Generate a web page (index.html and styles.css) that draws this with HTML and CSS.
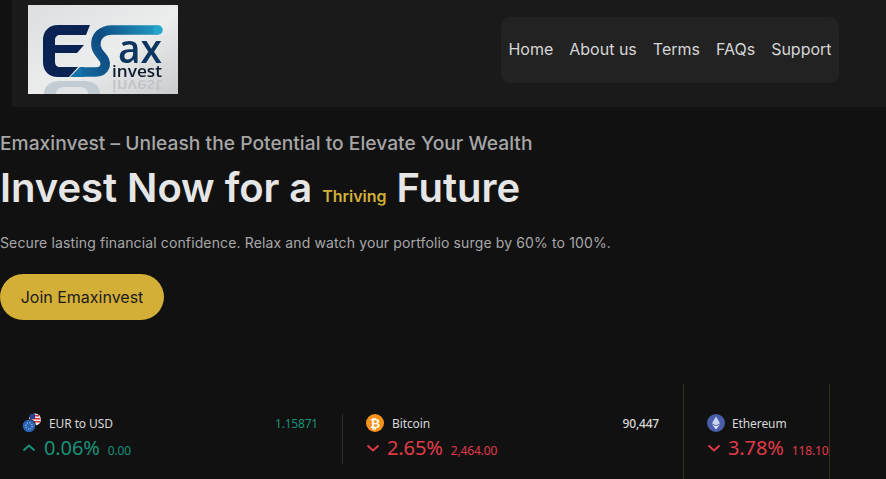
FILE: index.html
```html
<!DOCTYPE html>
<html lang="en">
<head>
<meta charset="utf-8">
<title>Emaxinvest</title>
<link rel="stylesheet" href="styles.css">
</head>
<body>
<header class="header">
  <div class="logo">
    <svg class="logo-art" viewBox="0 0 150 89" width="150" height="89">
      <defs>
        <linearGradient id="bg" x1="0" y1="0" x2="1" y2="1">
          <stop offset="0" stop-color="#dcdee0"/><stop offset=".55" stop-color="#eceded"/><stop offset="1" stop-color="#c9cbcd"/>
        </linearGradient>
        <linearGradient id="sw" gradientUnits="userSpaceOnUse" x1="45" y1="72" x2="134" y2="20">
          <stop offset="0" stop-color="#1273a8"/><stop offset=".42" stop-color="#0e4a80"/><stop offset="1" stop-color="#25a5cc"/>
        </linearGradient>
      </defs>
      <rect width="150" height="89" fill="url(#bg)"/>
      <path d="M16 89c0-9 7-13 16-13h24c9 0 16 4 16 13z" fill="#c4ccd3"/>
      <path d="M28 89c0-5 4-7 9-7h14c5 0 9 2 9 7z" fill="#e2e5e8"/>
      <path d="M62 20H30C21 20 15 26 15 35v22c0 9 6 15 15 15h11l9-10H32c-3 0-5-2-5-5v-9h22l7-8H27v-5c0-3 2-5 5-5h26z" fill="#0b2352"/>
      <path d="M42 72 52 62H56V72Z" fill="#1273a8"/>
      <path d="M54 67H68C75 67 78 62 77 57C76 51 69 49 68 41C67 31 74 25 84 25H130" fill="none" stroke="url(#sw)" stroke-width="9.500"/>
      <circle cx="130" cy="25" r="4.750" fill="#25a5cc"/>
      <text class="logo-ax" x="90" y="58" textLength="44" lengthAdjust="spacingAndGlyphs">ax</text>
      <text class="logo-invest" x="84" y="72" textLength="50" lengthAdjust="spacingAndGlyphs">invest</text>
      <text class="logo-mirror" x="84" y="-75" textLength="50" lengthAdjust="spacingAndGlyphs" transform="scale(1 -1)">invest</text>
    </svg>
  </div>
  <nav class="nav">
    <a href="#">Home</a>
    <a href="#">About us</a>
    <a href="#">Terms</a>
    <a href="#">FAQs</a>
    <a href="#">Support</a>
  </nav>
</header>

<main class="hero">
  <p class="tagline">Emaxinvest – Unleash the Potential to Elevate Your Wealth</p>
  <h1 class="title">Invest Now for a <span class="accent">Thriving</span> Future</h1>
  <p class="lead">Secure lasting financial confidence. Relax and watch your portfolio surge by 60% to 100%.</p>
  <a class="cta" href="#">Join Emaxinvest</a>
</main>

<section class="ticker">
  <div class="cell cell-short">
    <div class="row-top">
      <svg class="coin" viewBox="0 0 20 20" width="20" height="20">
        <circle cx="13" cy="6.500" r="6" fill="#e9e9e9"/>
        <path d="M8 2h9v1.500H8zM8.500 5h10v1.500h-10zM9 8h9v1.500H9z" fill="#d8333b"/>
        <path d="M8 1h5v5H8z" fill="#27408f"/>
        <circle cx="7" cy="13" r="7" fill="#0f1111"/>
        <circle cx="7" cy="13" r="6.200" fill="#2b64b5"/>
        <circle cx="7" cy="13" r="3.200" fill="none" stroke="#dfe7f5" stroke-width="1" stroke-dasharray="1 1.500"/>
      </svg>
      <span class="name">EUR to USD</span>
      <span class="price up">1.15871</span>
    </div>
    <div class="row-bottom up">
      <svg class="chev" viewBox="0 0 14 8" width="14" height="8"><path d="M1.500 6.500 7 1.500l5.500 5" fill="none" stroke="currentColor" stroke-width="2"/></svg>
      <span class="pct">0.06%</span>
      <span class="abs">0.00</span>
    </div>
  </div>
  <div class="cell cell-full">
    <div class="row-top">
      <svg class="coin" viewBox="0 0 18 18" width="18" height="18">
        <circle cx="9" cy="9" r="9" fill="#f7931a"/>
        <text class="coin-glyph" x="9" y="13.500" text-anchor="middle">₿</text>
      </svg>
      <span class="name">Bitcoin</span>
      <span class="price white">90,447</span>
    </div>
    <div class="row-bottom down">
      <svg class="chev" viewBox="0 0 14 8" width="14" height="8"><path d="M1.500 1.500 7 6.500l5.500-5" fill="none" stroke="currentColor" stroke-width="2"/></svg>
      <span class="pct">2.65%</span>
      <span class="abs">2,464.00</span>
    </div>
  </div>
  <div class="cell cell-full cell-last">
    <div class="row-top">
      <svg class="coin" viewBox="0 0 18 18" width="18" height="18">
        <circle cx="9" cy="9" r="9" fill="#4a5da8"/>
        <path d="M9 2.500 5 9.200 9 11.500l4-2.300z" fill="#c9d4f2"/>
        <path d="M5 10.200 9 15.500l4-5.300L9 12.500z" fill="#e6ecfb"/>
      </svg>
      <span class="name">Ethereum</span>
    </div>
    <div class="row-bottom down">
      <svg class="chev" viewBox="0 0 14 8" width="14" height="8"><path d="M1.500 1.500 7 6.500l5.500-5" fill="none" stroke="currentColor" stroke-width="2"/></svg>
      <span class="pct">3.78%</span>
      <span class="abs">118.10</span>
    </div>
  </div>
</section>
</body>
</html>
```
FILE: styles.css
```css
* { box-sizing: border-box; }

html, body {
  margin: 0;
  height: 479px;
  overflow: hidden;
  background: #111112;
}

body {
  font-family: Inter, "Liberation Sans", sans-serif;
  color: #e6e6e6;
}

.header {
  margin-left: 12px;
  height: 107px;
  background: #1a1a1a;
  display: flex;
  justify-content: space-between;
  align-items: flex-start;
  padding: 5px 47px 0 16px;
}

.logo {
  width: 150px;
  height: 89px;
  overflow: hidden;
}

.logo-art {
  display: block;
  filter: blur(.35px);
}

.logo-ax {
  font: 600 40px "Open Sans", sans-serif;
  fill: #0c3560;
}

.logo-invest {
  font: 600 17px "Open Sans", sans-serif;
  fill: #0f1a2c;
}

.logo-mirror {
  font: 600 17px "Open Sans", sans-serif;
  fill: #c0c5ca;
}

.nav {
  margin-top: 12px;
  width: 338px;
  height: 66px;
  background: #222222;
  border-radius: 9px;
  display: flex;
  align-items: center;
  justify-content: center;
  gap: 16px;
}

.nav a {
  color: #d6d6d6;
  text-decoration: none;
  font-size: 16px;
  line-height: 22px;
  margin-top: -2px;
}

.hero { padding-top: 24px; }

.tagline {
  margin: 0;
  font-size: 19.200px;
  font-weight: 500;
  line-height: 24px;
  letter-spacing: .035px;
  color: #a6a6a6;
}

.title {
  margin: 9px 0 0;
  font-size: 40px;
  line-height: 48px;
  font-weight: 600;
  letter-spacing: -.05px;
  color: #e6e6e6;
}

.accent {
  font-size: 16px;
  font-weight: 600;
  color: #d4af37;
}

.lead {
  margin: 13px 0 0;
  font-size: 14px;
  line-height: 20px;
  color: #a8a8a8;
  letter-spacing: .13px;
}

.cta {
  display: inline-block;
  margin-top: 21px;
  width: 164px;
  height: 46px;
  border-radius: 23px;
  background: #d4af37;
  color: #1b1b1b;
  font-size: 16px;
  line-height: 46px;
  text-align: center;
  text-decoration: none;
}

.ticker {
  margin-top: 64px;
  height: 95px;
  display: flex;
  font-family: "Noto Sans", "Open Sans", sans-serif;
}

.cell {
  width: 341px;
  padding-left: 22px;
  padding-right: 24px;
}

.cell-short {
  width: 343px;
  height: 50px;
  margin-top: 30px;
  border-right: 1px solid #2b2d2f;
}

.cell-full {
  padding-left: 23px;
  padding-top: 30px;
  border-right: 1px solid #35301f;
}

.cell-last {
  width: 146px;
  padding-right: 0;
}

.row-top {
  height: 20px;
  margin-top: -1px;
  display: flex;
  align-items: center;
  gap: 7px;
  font-size: 12px;
  letter-spacing: -.1px;
}

.cell-full:not(.cell-last) .coin { margin-right: 1px; }

.name { color: #d8d8d8; }

.price {
  margin-left: auto;
  letter-spacing: -.2px;
}

.white { color: #d8d8d8; font-weight: 500; }

.up { color: #179279; }
.down { color: #e03a48; }

.row-bottom {
  margin-top: 3px;
  height: 24px;
  display: flex;
  align-items: baseline;
  white-space: nowrap;
}

.chev {
  margin-right: 7px;
  align-self: center;
  flex: none;
}

.up .chev { margin-right: 8px; }

.pct {
  font-size: 20px;
  line-height: 24px;
  margin-right: 8px;
  letter-spacing: -.1px;
}

.abs {
  font-size: 12px;
  letter-spacing: -.15px;
}

.coin { flex: none; }

.coin-glyph {
  font: 700 12px "DejaVu Sans", sans-serif;
  fill: #fff;
}
```
